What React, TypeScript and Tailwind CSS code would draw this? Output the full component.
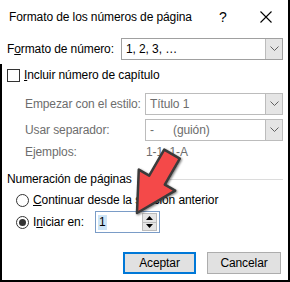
import React from "react";

const Chevron = () => (
  <svg width="9" height="6" viewBox="0 0 9 6" fill="none">
    <path d="M0.5 0.5 L4.5 4.5 L8.5 0.5" stroke="#606060" strokeWidth="1" />
  </svg>
);

const Combo = ({ children, w, disabled }: { children: React.ReactNode; w: string; disabled?: boolean }) => (
  <div className={`${w} shrink-0 h-[22px] flex border ${disabled ? "border-[#bcbcbc]" : "border-[#a0a0a0]"} bg-white`}>
    <div className={`flex-1 flex items-center pl-[4px] whitespace-nowrap ${disabled ? "text-[#6d6d6d]" : "text-black"}`}>{children}</div>
    <div className="w-[17px] h-full bg-[#e5e5e5] border-l border-[#bcbcbc] flex items-center justify-center">
      <Chevron />
    </div>
  </div>
);

export default function App() {
  return (
    <div
      className="relative w-[290px] h-[282px] bg-white border-r-2 border-b-2 border-black text-[12px] text-black overflow-hidden whitespace-nowrap tracking-[-0.1px]"
      style={{ fontFamily: '"Liberation Sans", Arial, sans-serif' }}
    >
      <div className="h-[33px] flex items-center pl-[9px] pt-[1px]">
        <span className="flex-1 text-[12px]">Formato de los números de página</span>
        <span className="w-[10px] text-[14px] mr-[31px]">?</span>
        <svg width="12" height="12" viewBox="0 0 12 12" className="mr-[16px]">
          <path d="M0.5 0.5 L11.5 11.5 M11.5 0.5 L0.5 11.5" stroke="#000" strokeWidth="1.1" />
        </svg>
      </div>
      <div className="mt-[5px] flex items-center pl-[7px]">
        <span className="w-[114px] shrink-0">
          F<span className="underline">o</span>rmato de número:
        </span>
        <Combo w="w-[162px]">1, 2, 3, …</Combo>
      </div>
      <div className="absolute left-0 top-[64px] bottom-0 border-l-2 border-black" />
      <div className="mt-[8px] h-[14px] flex items-center pl-[7px]">
        <div className="w-[13px] h-[13px] border border-[#333] bg-white" />
        <span className="ml-[4px]">
          <span className="underline">I</span>ncluir número de capítulo
        </span>
      </div>
      <div className="mt-[11px] flex items-center pl-[25px] text-[#6d6d6d]">
        <span className="w-[120px] shrink-0">Empezar con el estilo:</span>
        <Combo w="w-[138px]" disabled>
          Título 1
        </Combo>
      </div>
      <div className="mt-[4px] flex items-center pl-[25px] text-[#6d6d6d]">
        <span className="w-[120px] shrink-0">Usar separador:</span>
        <Combo w="w-[138px]" disabled>
          <span className="inline-block w-[23px]">-</span>(guión)
        </Combo>
      </div>
      <div className="mt-[2px] h-[18px] flex items-center pl-[25px] text-[#6d6d6d]">
        <span className="w-[121px] shrink-0">Ejemplos:</span>
        <span>1-1, 1-A</span>
      </div>
      <div className="mt-[10px] h-[16px] flex items-center pl-[7px]">
        <span>Numeración de páginas</span>
        <div className="flex-1 ml-[8px] mr-[5px] h-px bg-[#dcdcdc]" />
      </div>
      <div className="mt-[5px] h-[16px] flex items-center pl-[16px]">
        <div className="w-[13px] h-[13px] rounded-full border border-[#333] bg-white" />
        <span className="ml-[4px]">
          <span className="underline">C</span>ontinuar desde la sección anterior
        </span>
      </div>
      <div className="mt-[3px] flex items-center pl-[16px]">
        <div className="w-[13px] h-[13px] rounded-full border border-[#333] bg-white flex items-center justify-center">
          <div className="w-[7px] h-[7px] rounded-full bg-[#333]" />
        </div>
        <span className="ml-[4px] w-[62px] shrink-0">
          I<span className="underline">n</span>iciar en:
        </span>
        <div className="w-[65px] h-[22px] border border-[#7a9cc7] flex items-center bg-white">
          <div className="flex-1 pl-[2px] flex items-center">
            <span className="bg-[#cce4f7] px-[1px] leading-[15px]">1</span>
          </div>
          <div className="w-[15px] h-[18px] mr-[2px] flex flex-col border border-[#bcbcbc] bg-[#e5e5e5]">
            <div className="flex-1 flex items-center justify-center border-b border-[#bcbcbc]">
              <svg width="7" height="4" viewBox="0 0 7 4"><path d="M0 4 L3.5 0 L7 4 Z" fill="#000" /></svg>
            </div>
            <div className="flex-1 flex items-center justify-center">
              <svg width="7" height="4" viewBox="0 0 7 4"><path d="M0 0 L3.5 4 L7 0 Z" fill="#000" /></svg>
            </div>
          </div>
        </div>
      </div>
      <div className="mt-[19px] flex justify-end pr-[7px] gap-[11px]">
        <button className="w-[73px] h-[22px] border-2 border-[#0078d7] bg-[#e1e1e1] flex items-center justify-center">
          Aceptar
        </button>
        <button className="w-[74px] h-[22px] border border-[#adadad] bg-[#e1e1e1] flex items-center justify-center">
          Cancelar
        </button>
      </div>
      <svg className="absolute left-0 top-0 pointer-events-none" width="290" height="282" viewBox="0 0 290 282">
        <defs>
          <filter id="sh" x="-20%" y="-20%" width="140%" height="140%">
            <feDropShadow dx="1" dy="1" stdDeviation="1" floodColor="#000" floodOpacity="0.5" />
          </filter>
        </defs>
        <polygon
          points="164.2,149.6 149.2,175.6 138.8,169.6 137,213 175.2,190.6 164.8,184.6 179.8,158.6"
          fill="#f44a4a"
          stroke="#3a3a3a"
          strokeWidth="2.5"
          strokeLinejoin="round"
          filter="url(#sh)"
        />
      </svg>
    </div>
  );
}
